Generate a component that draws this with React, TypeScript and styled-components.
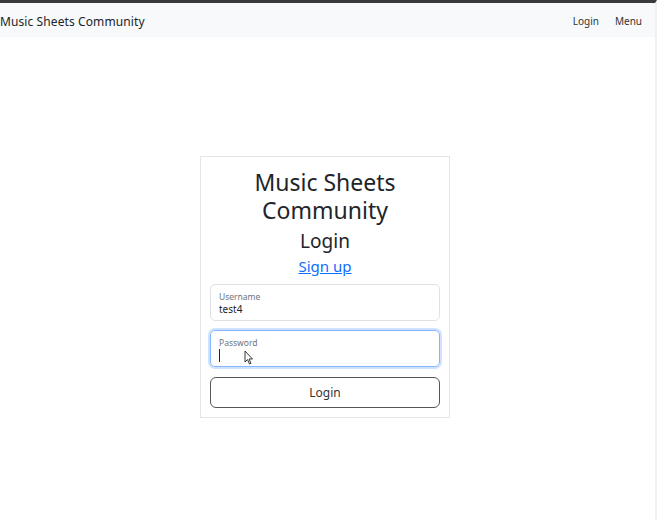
import React from "react";
import styled, { createGlobalStyle } from "styled-components";

const Global = createGlobalStyle`
  html, body { margin: 0; padding: 0; background: #fff; }
  body { font-family: "Noto Sans", "Open Sans", sans-serif; color: #212529; }
  * { box-sizing: border-box; }
`;

const Page = styled.div`
  width: 657px;
  height: 520px;
  border-top: 3px solid #3a3a3a;
  display: flex;
  flex-direction: column;
  border-right: 2px solid #f0f0f0;
`;

const Navbar = styled.nav`
  height: 34px;
  padding-top: 2px;
  background: #f8f9fa;
  display: flex;
  align-items: center;
  justify-content: space-between;
  padding-right: 13px;
`;

const Brand = styled.a`
  font-size: 12px;
  color: #212529;
  text-decoration: none;
  letter-spacing: 0.1px;
`;

const NavLinks = styled.div`
  display: flex;
  gap: 16px;
`;

const NavLink = styled.a`
  font-size: 10px;
  color: #333;
  text-decoration: none;
`;

const Main = styled.main`
  flex: 1;
  display: flex;
  justify-content: center;
  align-items: flex-start;
  padding-top: 119px;
  padding-right: 5px;
`;

const Card = styled.div`
  width: 250px;
  height: 262px;
  border: 1px solid #e5e5e5;
  padding: 11px 9px 9px;
  display: flex;
  flex-direction: column;
  align-items: stretch;
`;

const Title = styled.h1`
  margin: 0;
  font-size: 23px;
  font-weight: 400;
  line-height: 28px;
  text-align: center;
  color: #212529;
`;

const Subtitle = styled.h2`
  margin: 4px 0 0;
  font-size: 19px;
  font-weight: 400;
  line-height: 26px;
  text-align: center;
`;

const SignUp = styled.a`
  display: block;
  text-align: center;
  font-size: 15px;
  line-height: 24px;
  color: #0d6efd;
  text-decoration: underline;
`;

const Field = styled.div<{ $focused?: boolean }>`
  flex-shrink: 0;
  margin-top: ${(p) => (p.$focused ? "9px" : "6px")};
  height: 37px;
  border-radius: 5px;
  border: 1px solid ${(p) => (p.$focused ? "#86b7fe" : "#dee2e6")};
  box-shadow: ${(p) => (p.$focused ? "0 0 0 2px rgba(13,110,253,0.2)" : "none")};
  padding: 6px 8px 0;
  display: flex;
  flex-direction: column;
  position: relative;
`;

const Label = styled.label`
  font-size: 8.5px;
  line-height: 11px;
  color: #6c757d;
`;

const Value = styled.div`
  font-size: 10px;
  line-height: 15px;
  color: #212529;
`;

const Caret = styled.span`
  display: block;
  width: 1px;
  height: 13px;
  background: #222;
  margin-top: 1px;
`;

const Pointer = styled.svg`
  position: absolute;
  left: 33px;
  top: 19px;
`;

const Button = styled.button`
  flex-shrink: 0;
  margin-top: 10px;
  height: 31px;
  border: 1px solid #555;
  border-radius: 6px;
  background: #fff;
  font-family: inherit;
  font-size: 12px;
  color: #333;
`;

export default function App() {
  return (
    <>
      <Global />
      <Page>
        <Navbar>
          <Brand href="#">Music Sheets Community</Brand>
          <NavLinks>
            <NavLink href="#">Login</NavLink>
            <NavLink href="#">Menu</NavLink>
          </NavLinks>
        </Navbar>
        <Main>
          <Card>
            <Title>Music Sheets Community</Title>
            <Subtitle>Login</Subtitle>
            <SignUp href="#">Sign up</SignUp>
            <Field>
              <Label>Username</Label>
              <Value>test4</Value>
            </Field>
            <Field $focused>
              <Label>Password</Label>
              <Caret />
              <Pointer width="10" height="15" viewBox="0 0 10 15">
                <path d="M1 1 L1 12 L3.5 9.5 L5.5 14 L7 13.3 L5 9 L8.5 9 Z" fill="#fff" stroke="#222" strokeWidth="0.9" strokeLinejoin="round" />
              </Pointer>
            </Field>
            <Button>Login</Button>
          </Card>
        </Main>
      </Page>
    </>
  );
}
